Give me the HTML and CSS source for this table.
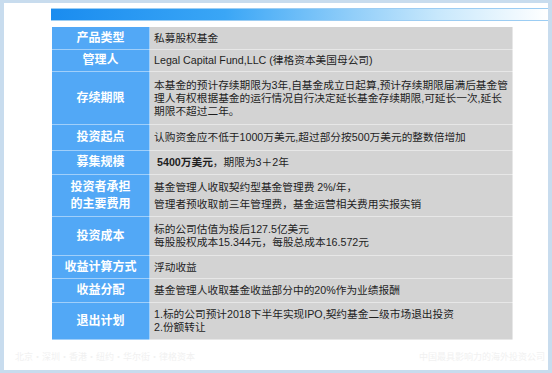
FILE: index.html
```html
<!DOCTYPE html>
<html lang="zh">
<head>
<meta charset="utf-8">
<link rel="stylesheet" href="styles.css">
</head>
<body>
<div class="panel">
  <div class="bar"></div>
  <table class="info">
    <tr class="r23"><th>产品类型</th><td>私募股权基金</td></tr>
    <tr class="r22"><th>管理人</th><td>Legal Capital Fund,LLC (律格资本美国母公司)</td></tr>
    <tr class="r53"><th>存续期限</th><td>本基金的预计存续期限为3年,自基金成立日起算,预计存续期限届满后基金管理人有权根据基金的运行情况自行决定延长基金存续期限,可延长一次,延长期限不超过二年。</td></tr>
    <tr class="r26"><th>投资起点</th><td>认购资金应不低于1000万美元,超过部分按500万美元的整数倍增加</td></tr>
    <tr class="r24"><th>募集规模</th><td class="indent"><b>5400万美元</b>，期限为3＋2年</td></tr>
    <tr class="r42"><th class="tall">投资者承担<br>的主要费用</th><td class="tall">基金管理人收取契约型基金管理费 2%/年，<br>管理者预收取前三年管理费，基金运营相关费用实报实销</td></tr>
    <tr class="r39"><th>投资成本</th><td>标的公司估值为投后127.5亿美元<br>每股股权成本15.344元，每股总成本16.572元</td></tr>
    <tr class="r23"><th>收益计算方式</th><td>浮动收益</td></tr>
    <tr class="r24"><th>收益分配</th><td>基金管理人收取基金收益部分中的20%作为业绩报酬</td></tr>
    <tr class="r37"><th>退出计划</th><td>1.标的公司预计2018下半年实现IPO,契约基金二级市场退出投资<br>2.份额转让</td></tr>
  </table>
  <div class="foot">
    <span>北京·深圳·香港·纽约·华尔街·律格资本</span>
    <span>中国最具影响力的海外投资公司</span>
  </div>
</div>
</body>
</html>
```

FILE: styles.css
```css
html, body {
  margin: 0;
  padding: 0;
}
body {
  background: #c8dcee;
  width: 552px;
  height: 373px;
  overflow: hidden;
  font-family: "Liberation Sans", "Noto Sans CJK SC", sans-serif;
}
.panel {
  margin: 3px 4px 0 4px;
  width: 544px;
  height: 367px;
  background: #ffffff;
  box-sizing: border-box;
  padding: 5px 0 0 47px;
}
.bar {
  height: 11px;
  border-top: 1px solid #9ccdf3;
  border-bottom: 1px solid #9ccdf3;
  background: linear-gradient(to right, #1a8cef 0%, #3aa6f6 35%, #8fcdf9 60%, #c8e8fc 78%, #ffffff 100%);
}
.info {
  margin-top: 5px;
  width: 462px;
  border-collapse: collapse;
  font-size: 10.7px;
  line-height: 13px;
}
.info th, .info td {
  border: 1px solid rgba(255, 255, 255, 0.45);
  vertical-align: middle;
}
.info th {
  width: 89px;
  padding: 0 4px;
  background: #52a8f6;
  color: #ffffff;
  font-weight: 600;
  text-align: center;
  font-size: 12px;
}
.info td {
  padding: 0 2px 0 4px;
  background: #d3d3d3;
  color: #1e1e1e;
}
.info td.indent {
  padding-left: 7px;
}
.info b {
  font-weight: 700;
}
.info .tall {
  line-height: 17px;
}
.r22 { height: 22px; }
.r23 { height: 23px; }
.r24 { height: 24px; }
.r26 { height: 26px; }
.r37 { height: 37px; }
.r39 { height: 39px; }
.r42 { height: 42px; }
.r53 { height: 53px; }
.foot {
  margin: 10px 0 0 -36px;
  display: flex;
  justify-content: space-between;
  font-size: 9px;
  color: #f1f1f1;
  font-family: "Noto Sans CJK SC", sans-serif;
  padding-right: 3px;
}
```
